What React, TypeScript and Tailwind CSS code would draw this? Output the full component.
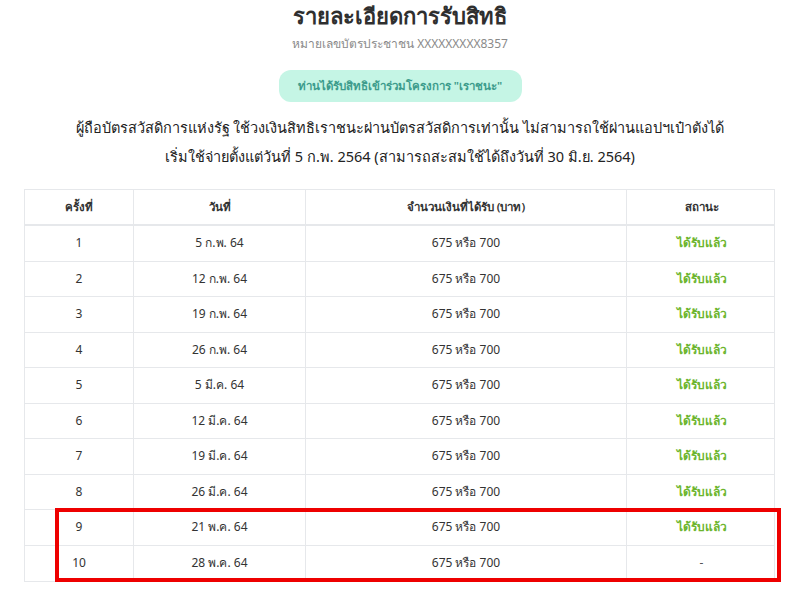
import React from 'react';

interface Payment {
  round: number;
  date: string;
  amount: string;
  status: string;
}

const payments: Payment[] = [
  { round: 1, date: '5 ก.พ. 64', amount: '675 หรือ 700', status: 'ได้รับแล้ว' },
  { round: 2, date: '12 ก.พ. 64', amount: '675 หรือ 700', status: 'ได้รับแล้ว' },
  { round: 3, date: '19 ก.พ. 64', amount: '675 หรือ 700', status: 'ได้รับแล้ว' },
  { round: 4, date: '26 ก.พ. 64', amount: '675 หรือ 700', status: 'ได้รับแล้ว' },
  { round: 5, date: '5 มี.ค. 64', amount: '675 หรือ 700', status: 'ได้รับแล้ว' },
  { round: 6, date: '12 มี.ค. 64', amount: '675 หรือ 700', status: 'ได้รับแล้ว' },
  { round: 7, date: '19 มี.ค. 64', amount: '675 หรือ 700', status: 'ได้รับแล้ว' },
  { round: 8, date: '26 มี.ค. 64', amount: '675 หรือ 700', status: 'ได้รับแล้ว' },
  { round: 9, date: '21 พ.ค. 64', amount: '675 หรือ 700', status: 'ได้รับแล้ว' },
  { round: 10, date: '28 พ.ค. 64', amount: '675 หรือ 700', status: '-' },
];

const cols = 'grid grid-cols-[109px_172px_321px_149px]';

export default function App() {
  return (
    <div
      className="relative w-[800px] h-[589px] overflow-hidden bg-white text-[#333]"
      style={{ fontFamily: '"Noto Sans", "DejaVu Sans", sans-serif' }}
    >
      {/* Heading */}
      <div className="flex flex-col items-center">
        <h1 className="text-[22px] font-bold leading-[30px] text-[#2f2f2f]">รายละเอียดการรับสิทธิ</h1>
        <p className="mt-[5px] text-[12px] leading-[18px] text-[#8a8a8a]">หมายเลขบัตรประชาชน XXXXXXXXX8357</p>
        <div className="mt-[17px] flex h-[32px] w-[243px] items-center justify-center rounded-[12px] bg-[#c5f5e5] text-[11.5px] font-semibold text-[#3d9c8c]">
          ท่านได้รับสิทธิเข้าร่วมโครงการ "เราชนะ"
        </div>
        <div className="mt-[11px] text-center text-[14.5px] leading-[29px] text-[#222]">
          <p>ผู้ถือบัตรสวัสดิการแห่งรัฐ ใช้วงเงินสิทธิเราชนะผ่านบัตรสวัสดิการเท่านั้น ไม่สามารถใช้ผ่านแอปฯเป๋าตังได้</p>
          <p>เริ่มใช้จ่ายตั้งแต่วันที่ 5 ก.พ. 2564 (สามารถสะสมใช้ได้ถึงวันที่ 30 มิ.ย. 2564)</p>
        </div>
      </div>

      {/* Table */}
      <div className="mx-[24px] mt-[18px] w-[751px] border border-[#e6e8eb] text-[12px]">
        <div className={`${cols} h-[36px] border-b-2 border-[#e6e8eb] text-[11.5px] font-semibold text-[#333]`}>
          <div className="flex items-center justify-center border-r border-[#e6e8eb]">ครั้งที่</div>
          <div className="flex items-center justify-center border-r border-[#e6e8eb]">วันที่</div>
          <div className="flex items-center justify-center border-r border-[#e6e8eb]">จำนวนเงินที่ได้รับ (บาท)</div>
          <div className="flex items-center justify-center">สถานะ</div>
        </div>
        {payments.map((p, i) => (
          <div
            key={p.round}
            className={`${cols} h-[35.5px] ${i < payments.length - 1 ? 'border-b border-[#e6e8eb]' : ''}`}
          >
            <div className="flex items-center justify-center border-r border-[#e6e8eb]">{p.round}</div>
            <div className="flex items-center justify-center border-r border-[#e6e8eb]">{p.date}</div>
            <div className="flex items-center justify-center border-r border-[#e6e8eb]">{p.amount}</div>
            <div
              className={`flex items-center justify-center ${
                p.status === '-' ? 'text-[#555]' : 'font-semibold text-[#6cb52d]'
              }`}
            >
              {p.status}
            </div>
          </div>
        ))}
      </div>

      {/* Highlight annotation */}
      <div className="pointer-events-none absolute left-[55px] top-[508px] h-[74px] w-[726px] border-[4px] border-[#ee0000]" />
    </div>
  );
}
